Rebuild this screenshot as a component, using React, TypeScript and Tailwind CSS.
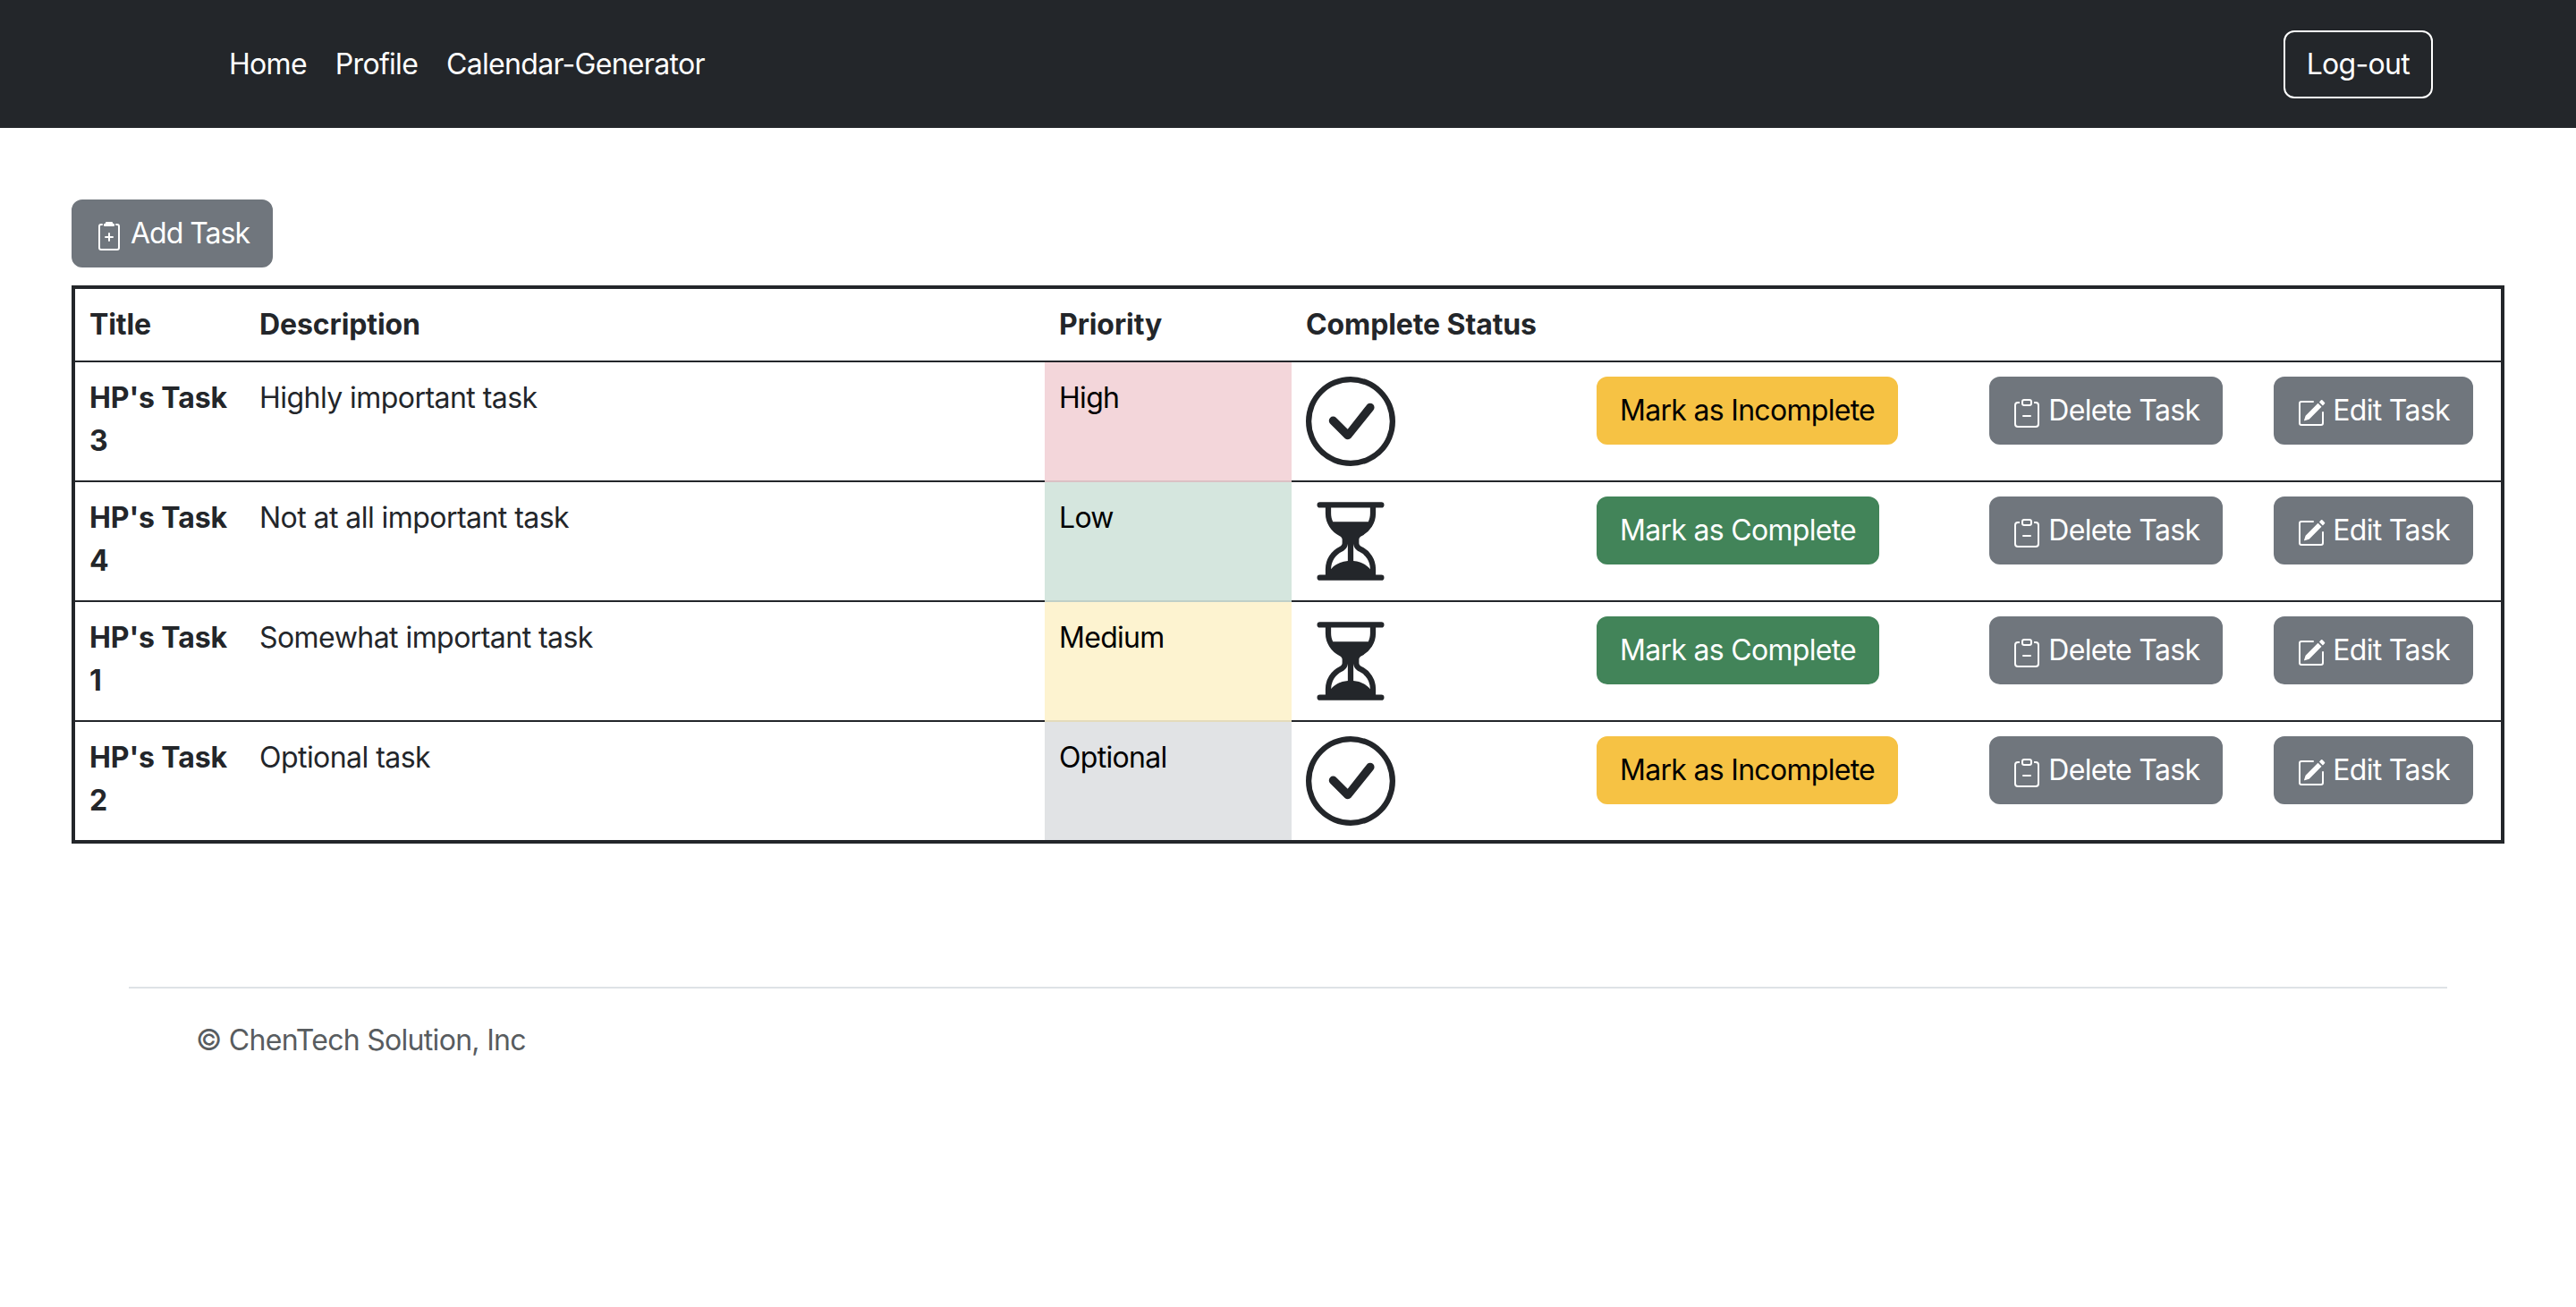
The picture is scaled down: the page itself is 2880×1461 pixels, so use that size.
import React from "react";
import { BsCheckCircle, BsHourglassSplit, BsClipboard2Plus, BsClipboardMinus, BsPencilSquare } from "react-icons/bs";

const rows = [
  { n: "3", d: "Highly important task", p: "High", bg: "bg-[#f3d6da]", bc: "border-[#dbc1c4]", done: true },
  { n: "4", d: "Not at all important task", p: "Low", bg: "bg-[#d5e6de]", bc: "border-[#bfcfc8]", done: false },
  { n: "1", d: "Somewhat important task", p: "Medium", bg: "bg-[#fdf3d0]", bc: "border-[#e4dbbb]", done: false },
  { n: "2", d: "Optional task", p: "Optional", bg: "bg-[#e1e3e5]", bc: "border-[#e1e3e5]", done: true },
];

function Btn({ className, children }: { className: string; children: React.ReactNode }) {
  return (
    <button className={"block w-fit rounded-xl border-2 px-6 py-3 text-[32px] leading-[48px] whitespace-nowrap " + className}>
      {children}
    </button>
  );
}

const grey = "bg-[#70767d] border-[#70767d] text-white";
const icon = "inline w-8 h-8 align-[-8px]";

export default function App() {
  return (
    <div className="bg-white text-[32px] leading-[48px] tracking-[-0.7px] text-[#23262a] font-['Inter','Liberation_Sans',sans-serif]">
      <nav className="h-[143px] bg-[#23262a] flex items-center pl-[240px] pr-[160px] text-white">
        <a className="px-4">Home</a>
        <a className="px-4">Profile</a>
        <a className="px-4">Calendar-Generator</a>
        <button className="ml-auto rounded-xl border-2 border-white px-6 py-3 leading-[48px]">Log-out</button>
      </nav>
      <main className="px-20 pt-20">
        <Btn className={grey + " tracking-[-1px]"}>
          <BsClipboard2Plus className={icon} /> Add Task
        </Btn>
        <table className="mt-5 w-[2720px] table-fixed border-separate border-spacing-0 border-4 border-[#23262a]">
          <colgroup>
            <col className="w-[190px]" />
            <col className="w-[894px]" />
            <col className="w-[276px]" />
            <col className="w-[325px]" />
            <col className="w-[439px]" />
            <col className="w-[318px]" />
            <col />
          </colgroup>
          <thead>
            <tr className="text-left">
              {["Title", "Description", "Priority", "Complete Status", "", "", ""].map((h, i) => (
                <th key={i} className="p-4 font-bold tracking-[-0.1px] border-b-2 border-[#23262a] whitespace-nowrap">{h}</th>
              ))}
            </tr>
          </thead>
          <tbody>
            {rows.map((r, i) => {
              const b = i < 3 ? "border-b-2 border-[#23262a]" : "";
              return (
                <tr key={r.n} className="align-top">
                  <th className={"p-4 font-bold tracking-[-0.1px] text-left " + b}>HP's Task {r.n}</th>
                  <td className={"p-4 tracking-[-0.55px] " + b}>{r.d}</td>
                  <td className={"p-4 text-black " + r.bg + " " + (i < 3 ? "border-b-2 " + r.bc : "")}>{r.p}</td>
                  <td className={"p-4 " + b}>
                    {r.done ? <BsCheckCircle className="w-[100px] h-[100px]" /> : <BsHourglassSplit className="w-[100px] h-[100px]" />}
                  </td>
                  <td className={"p-4 " + b}>
                    {r.done ? (
                      <Btn className="bg-[#f6c244] border-[#f6c244] text-black">Mark as Incomplete</Btn>
                    ) : (
                      <Btn className="bg-[#428459] border-[#428459] text-white">Mark as Complete</Btn>
                    )}
                  </td>
                  <td className={"p-4 " + b}>
                    <Btn className={grey}>
                      <BsClipboardMinus className={icon} /> Delete Task
                    </Btn>
                  </td>
                  <td className={"p-4 " + b}>
                    <Btn className={grey}>
                      <BsPencilSquare className={icon} /> Edit Task
                    </Btn>
                  </td>
                </tr>
              );
            })}
          </tbody>
        </table>
      </main>
      <footer className="mx-[144px] mt-40 border-t-2 border-[#dee2e6] pt-[34px] pl-[75px] text-[#585c5f]">
        © ChenTech Solution, Inc
      </footer>
    </div>
  );
}
